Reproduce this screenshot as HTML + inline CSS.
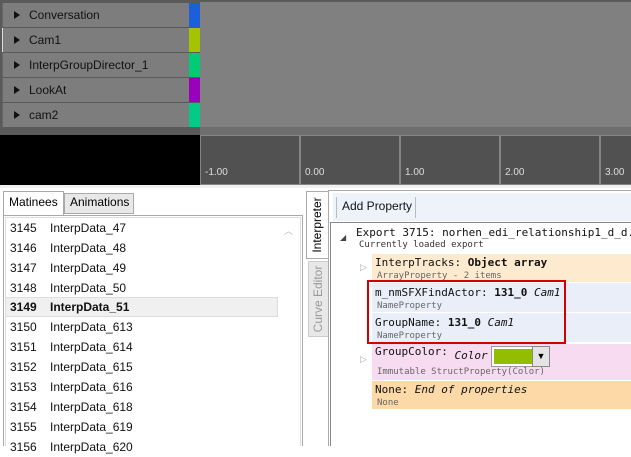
<!DOCTYPE html><html><head><style>
*{margin:0;padding:0;box-sizing:border-box}
body{width:631px;height:446px;overflow:hidden;background:#fff;font-family:"Liberation Sans",sans-serif;font-size:12px;position:relative}
.a{position:absolute}
.row{position:absolute;left:2px;width:187px;height:24px;background:#7d7d7d;color:#111;font-size:12px;line-height:24px;padding-left:26px;border-left:1px solid #666}
.tri{position:absolute;left:11px;top:8px;width:0;height:0;border-left:6px solid #111;border-top:4px solid transparent;border-bottom:4px solid transparent}
.li{position:absolute;left:10px;font-size:12px;color:#111;height:20px;line-height:20px}
.li span{position:absolute;left:40px;white-space:nowrap}
.pb{position:absolute;left:372px;width:259px;overflow:hidden}
.pt{font-family:"DejaVu Sans Mono","Liberation Mono",monospace;font-size:11px;line-height:15px;color:#111;padding-left:3px;white-space:nowrap}
.ps{font-family:"DejaVu Sans Mono","Liberation Mono",monospace;font-size:9px;line-height:12px;color:#666;padding-left:5px;white-space:nowrap}
</style></head><body>
<div class="a" style="left:0;top:0;width:631px;height:135px;background:#5a5a5a"></div>
<div class="a" style="left:200px;top:2px;width:431px;height:125px;background:#808080"></div>
<div class="row" style="top:3px"><div class="tri"></div>Conversation</div>
<div class="row" style="top:28px;border-left:1px solid #ddd"><div class="tri"></div>Cam1</div>
<div class="row" style="top:53px"><div class="tri"></div>InterpGroupDirector_1</div>
<div class="row" style="top:78px"><div class="tri"></div>LookAt</div>
<div class="row" style="top:103px"><div class="tri"></div>cam2</div>
<div class="a" style="left:189px;top:3px;width:11px;height:24px;background:#1c5fdc"></div>
<div class="a" style="left:189px;top:28px;width:11px;height:24px;background:#a4c400"></div>
<div class="a" style="left:189px;top:53px;width:11px;height:24px;background:#00cc77"></div>
<div class="a" style="left:189px;top:78px;width:11px;height:24px;background:#9a00bb"></div>
<div class="a" style="left:189px;top:103px;width:11px;height:24px;background:#00cc88"></div>
<div class="a" style="left:200px;top:127px;width:431px;height:8px;background:#6e6e6e"></div>
<div class="a" style="left:0;top:135px;width:200px;height:50px;background:#000"></div>
<div class="a" style="left:200px;top:135px;width:431px;height:50px;background:#858585"></div>
<div class="a" style="left:201px;top:136px;width:98px;height:48px;background:#515151;color:#ddd;font-size:10px;padding:31px 0 0 4px">-1.00</div>
<div class="a" style="left:301px;top:136px;width:98px;height:48px;background:#515151;color:#ddd;font-size:10px;padding:31px 0 0 4px">0.00</div>
<div class="a" style="left:401px;top:136px;width:98px;height:48px;background:#515151;color:#ddd;font-size:10px;padding:31px 0 0 4px">1.00</div>
<div class="a" style="left:501px;top:136px;width:98px;height:48px;background:#515151;color:#ddd;font-size:10px;padding:31px 0 0 4px">2.00</div>
<div class="a" style="left:601px;top:136px;width:30px;height:48px;background:#515151;color:#ddd;font-size:10px;padding:31px 0 0 4px">3.00</div>
<div class="a" style="left:0;top:185px;width:631px;height:3px;background:#f0f0f0"></div>
<div class="a" style="left:3px;top:191px;width:61px;height:25px;background:#fff;border:1px solid #aaa;border-bottom:none;padding:3px 0 0 5px">Matinees</div>
<div class="a" style="left:64px;top:193px;width:70px;height:21px;background:#e8e8e8;border:1px solid #aaa;padding:1px 0 0 5px">Animations</div>
<div class="a" style="left:3px;top:215px;width:300px;height:231px;border:1px solid #aaa;border-bottom:none"></div>
<div class="a" style="left:5px;top:217px;width:296px;height:229px;border:1px solid #ddd;border-bottom:none"></div>
<div class="a" style="left:284px;top:224px;color:#bbb;font-size:9px">︿</div>
<div class="a" style="left:5px;top:297px;width:273px;height:20px;background:#f0f0f0;border:1px solid #ddd"></div>
<div class="li" style="top:218px">3145<span>InterpData_47</span></div>
<div class="li" style="top:238px">3146<span>InterpData_48</span></div>
<div class="li" style="top:258px">3147<span>InterpData_49</span></div>
<div class="li" style="top:278px">3148<span>InterpData_50</span></div>
<div class="li" style="top:297px;font-weight:bold">3149<span>InterpData_51</span></div>
<div class="li" style="top:317px">3150<span>InterpData_613</span></div>
<div class="li" style="top:337px">3151<span>InterpData_614</span></div>
<div class="li" style="top:357px">3152<span>InterpData_615</span></div>
<div class="li" style="top:377px">3153<span>InterpData_616</span></div>
<div class="li" style="top:397px">3154<span>InterpData_618</span></div>
<div class="li" style="top:417px">3155<span>InterpData_619</span></div>
<div class="li" style="top:437px">3156<span>InterpData_620</span></div>
<div class="a" style="left:305px;top:190px;width:23px;height:256px;background:#fff"></div>
<div class="a" style="left:306px;top:191px;width:22px;height:68px;background:#fff;border:1px solid #aaa;border-right:none"></div>
<div class="a" style="left:317px;top:225px;transform:translate(-50%,-50%) rotate(-90deg);white-space:nowrap">Interpreter</div>
<div class="a" style="left:308px;top:261px;width:20px;height:76px;background:#e8e8e8;border:1px solid #ccc;border-right:none"></div>
<div class="a" style="left:318px;top:299px;transform:translate(-50%,-50%) rotate(-90deg);white-space:nowrap;color:#999">Curve Editor</div>
<div class="a" style="left:328px;top:190px;width:303px;height:256px;border-left:1px solid #aaa;border-top:1px solid #aaa"></div>
<div class="a" style="left:333px;top:193px;width:298px;height:28px;background:#eef3fa"></div>
<div class="a" style="left:336px;top:197px;width:80px;height:21px;border-left:1px solid #bbb;border-right:1px solid #bbb;padding:2px 0 0 5px;color:#111">Add Property</div>
<div class="a" style="left:330px;top:222px;width:301px;height:224px;border-left:1px solid #888;border-top:1px solid #888"></div>
<div class="a" style="left:340px;top:233px;font-size:8px;color:#444">◢</div>
<div class="a" style="left:356px;top:226px;width:275px;overflow:hidden;white-space:nowrap;font-size:11px;line-height:14px;color:#111;font-family:'DejaVu Sans Mono',monospace">Export 3715: norhen_edi_relationship1_d_d.</div>
<div class="a ps" style="left:354px;top:239px;color:#333">Currently loaded export</div>
<div class="a" style="left:360px;top:262px;font-size:9px;color:#aaa">▷</div>
<div class="a" style="left:360px;top:354px;font-size:9px;color:#aaa">▷</div>
<div class="pb" style="top:254px;height:28px;background:#fdeacf"><div class="pt" style="margin-top:1px">InterpTracks: <b>Object array</b></div><div class="ps">ArrayProperty - 2 items</div></div>
<div class="pb" style="top:283px;height:29px;background:#e9eef8"><div class="pt" style="margin-top:2px">m_nmSFXFindActor: <b>131_0</b> <i>Cam1</i></div><div class="ps">NameProperty</div></div>
<div class="pb" style="top:313px;height:29px;background:#e9eef8"><div class="pt" style="margin-top:2px">GroupName: <b>131_0</b> <i>Cam1</i></div><div class="ps">NameProperty</div></div>
<div class="pb" style="top:344px;height:36px;background:#f7dcf1"><div class="pt" style="margin-top:0">GroupColor: <i style="position:relative;top:4px">Color</i></div><div class="ps" style="margin-top:7px">Immutable StructProperty(Color)</div></div>
<div class="a" style="left:491px;top:346px;width:59px;height:21px;border:1px solid #999;background:#fff"></div>
<div class="a" style="left:494px;top:349px;width:38px;height:15px;background:#92bd00"></div>
<div class="a" style="left:532px;top:346px;width:18px;height:21px;border:1px solid #888;background:#e4e4e4;font-size:9px;text-align:center;line-height:19px">▼</div>
<div class="pb" style="top:381px;height:28px;background:#fcd9a6"><div class="pt" style="margin-top:1px">None: <i>End of properties</i></div><div class="ps">None</div></div>
<div class="a" style="left:367px;top:280px;width:199px;height:64px;border:2px solid #d40000"></div>
</body></html>
